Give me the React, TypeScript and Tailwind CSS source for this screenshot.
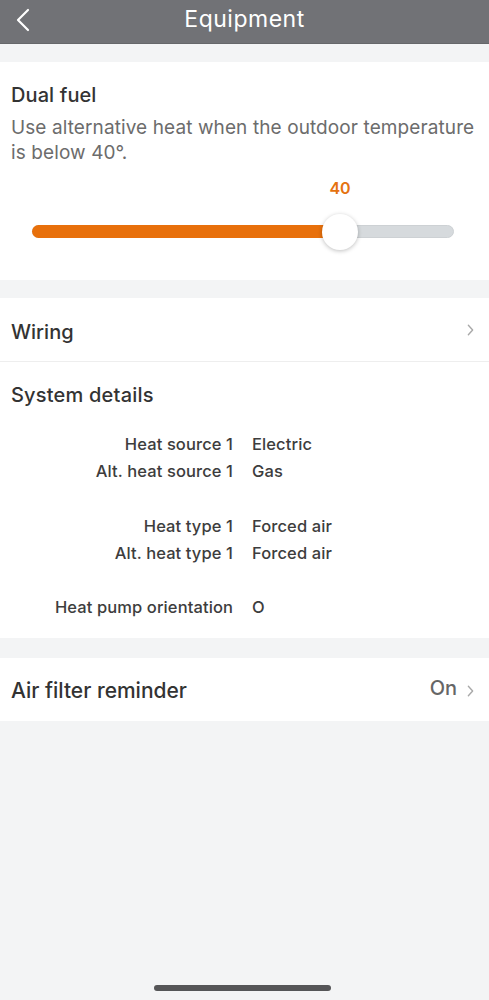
import React from "react";

function Chevron({ className }: { className?: string }) {
  return (
    <svg className={className} viewBox="0 0 8 14" fill="none" stroke="currentColor" strokeWidth="1.6" strokeLinecap="round" strokeLinejoin="round">
      <path d="M1.5 1.5 L6.5 7 L1.5 12.5" />
    </svg>
  );
}

function Row({ label, value }: { label: string; value: string }) {
  return (
    <div className="flex items-center h-[27px]">
      <div className="w-[233px] text-right text-[16.5px] tracking-[0.1px] font-medium text-[#3d3d3d]">{label}</div>
      <div className="ml-[19px] text-[16.5px] tracking-[0.1px] font-medium text-[#3d3d3d]">{value}</div>
    </div>
  );
}

export default function App() {
  return (
    <div className="min-h-[1000px] bg-[#f3f4f5] flex flex-col relative" style={{ fontFamily: "Inter, 'Noto Sans', sans-serif" }}>
      {/* Header */}
      <div className="h-[44px] bg-[#717276] border-b border-[#66676a] flex items-center relative">
        <svg className="absolute left-[15px] top-[8px] w-[16px] h-[24px] text-white" viewBox="0 0 16 24" fill="none" stroke="currentColor" strokeWidth="2.2" strokeLinecap="round" strokeLinejoin="round">
          <path d="M13 2 L3 12 L13 22" />
        </svg>
        <div className="flex-1 text-center text-white text-[23px] tracking-[0.5px] -mt-[5px]">Equipment</div>
      </div>

      {/* Dual fuel */}
      <div className="mt-[18px] bg-white px-[11px] pt-[20px] pb-[29px]">
        <div className="text-[20px] font-medium text-[#333] leading-[26px] tracking-[0.1px]">Dual fuel</div>
        <div className="mt-[7px] text-[19px] text-[#6c6c6c] leading-[25px] tracking-[0.1px]">
          Use alternative heat when the outdoor temperature is below 40°.
        </div>
        <div className="relative h-[86px]">
          <div className="absolute left-[309px] top-[13px] w-[40px] text-center text-[16px] font-semibold text-[#e5720f] leading-[20px]">40</div>
          <div className="absolute left-[21px] right-[24px] top-[60px] h-[13px] rounded-full bg-[#d6dadd] border border-[#cdd1d4]" />
          <div className="absolute left-[21px] w-[310px] top-[60px] h-[13px] rounded-l-full bg-[#e8700b]" />
          <div className="absolute left-[311px] top-[49px] w-[36px] h-[36px] rounded-full bg-white shadow-[0_1px_4px_rgba(0,0,0,0.25)]" />
        </div>
      </div>

      {/* Wiring + System details */}
      <div className="mt-[18px] bg-white">
        <div className="h-[64px] flex items-center px-[11px] pt-[4px] border-b border-[#eeeeee]">
          <div className="flex-1 text-[20px] font-medium text-[#333]">Wiring</div>
          <Chevron className="w-[7px] h-[12px] text-[#a8a8a8] mr-[4px] -mt-[4px]" />
        </div>
        <div className="px-[11px] pt-[20px] pb-[15px]">
          <div className="text-[20px] font-medium text-[#333] leading-[26px] tracking-[0.2px]">System details</div>
        </div>
        <div className="pb-[17px]">
          <div className="mt-[8px]">
            <Row label="Heat source 1" value="Electric" />
            <Row label="Alt. heat source 1" value="Gas" />
          </div>
          <div className="mt-[28px]">
            <Row label="Heat type 1" value="Forced air" />
            <Row label="Alt. heat type 1" value="Forced air" />
          </div>
          <div className="mt-[27px]">
            <Row label="Heat pump orientation" value="O" />
          </div>
        </div>
      </div>

      {/* Air filter */}
      <div className="mt-[20px] bg-white h-[63px] flex items-center px-[11px] pt-[2px]">
        <div className="flex-1 text-[21px] font-medium text-[#333]">Air filter reminder</div>
        <div className="text-[20px] font-medium text-[#666] mr-[10px] -mt-[5px]">On</div>
        <Chevron className="w-[7px] h-[12px] text-[#a8a8a8] mr-[4px]" />
      </div>

      <div className="absolute left-[154px] top-[985px] w-[177px] h-[6px] rounded-full bg-[#555557]" />
    </div>
  );
}
